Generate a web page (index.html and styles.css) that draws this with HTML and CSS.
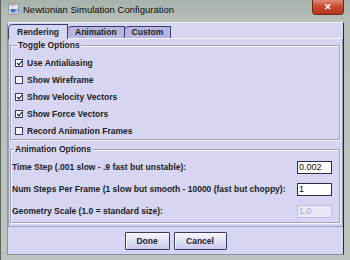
FILE: index.html
```html
<!DOCTYPE html>
<html lang="en">
<head>
  <meta charset="UTF-8">
  <title>Newtonian Simulation Configuration</title>
  <link rel="stylesheet" href="styles.css">
</head>
<body>
  <div class="window">
    <div class="titlebar">
      <svg class="app-icon" viewBox="0 0 12 12" xmlns="http://www.w3.org/2000/svg">
        <rect x="0.5" y="0.5" width="11" height="11" rx="1.5" fill="#dfe6f0" stroke="#7d8aa0"/>
        <path d="M4 3c0.8-0.8 0-1.4 0.7-2M6 3c0.8-0.8 0-1.4 0.7-2" stroke="#d0603a" stroke-width="0.8" fill="none"/>
        <path d="M2.5 6h6v1.5c0 1.4-1.2 2.5-3 2.5s-3-1.1-3-2.5z" fill="#4b77b8"/>
        <path d="M8.5 6.5h1a1 1 0 0 1 0 2h-1.2" stroke="#4b77b8" stroke-width="0.8" fill="none"/>
      </svg>
      <span class="title">Newtonian Simulation Configuration</span>
      <span class="close">&#x2715;</span>
    </div>
    <div class="client">
      <div class="tabs">
        <div class="tab selected">Rendering</div>
        <div class="tab">Animation</div>
        <div class="tab">Custom</div>
      </div>
      <div class="tabpanel">
        <fieldset class="group toggles">
          <legend>Toggle Options</legend>
          <label class="check-row"><span class="box checked"></span>Use Antialiasing</label>
          <label class="check-row"><span class="box"></span>Show Wireframe</label>
          <label class="check-row"><span class="box checked"></span>Show Velocity Vectors</label>
          <label class="check-row"><span class="box checked"></span>Show Force Vectors</label>
          <label class="check-row"><span class="box"></span>Record Animation Frames</label>
        </fieldset>
        <fieldset class="group anim">
          <legend>Animation Options</legend>
          <div class="field-row">
            <span>Time Step (.001 slow - .9 fast but unstable):</span>
            <span class="field">0.002</span>
          </div>
          <div class="field-row">
            <span>Num Steps Per Frame (1 slow but smooth - 10000 (fast but choppy):</span>
            <span class="field">1</span>
          </div>
          <div class="field-row">
            <span>Geometry Scale (1.0 = standard size):</span>
            <span class="field disabled">1.0</span>
          </div>
        </fieldset>
      </div>
      <div class="buttons">
        <button class="btn done">Done</button>
        <button class="btn cancel">Cancel</button>
      </div>
    </div>
  </div>
</body>
</html>
```

FILE: styles.css
```css
body {
  margin: 0;
  font-family: "Liberation Sans", Arial, sans-serif;
  background: #b7bfb8;
}

.window {
  width: 350px;
  height: 260px;
  box-sizing: border-box;
  display: flex;
  flex-direction: column;
  padding: 0 6px 5px 6px;
  border-left: 1px solid #5c645d;
  background: linear-gradient(#a9b2aa, #b8c0b9 22px, #bcc4bd);
}

.titlebar {
  height: 22px;
  display: flex;
  align-items: flex-start;
  color: #000;
}

.app-icon {
  width: 11px;
  height: 12px;
  margin: 3px 0 0 1px;
}

.title {
  margin: 4px 0 0 4px;
  font-size: 9.5px;
  color: #0a0a0a;
}

.close {
  margin-left: auto;
  width: 32px;
  height: 15px;
  box-sizing: border-box;
  border: 1px solid #6e2a1e;
  border-top: none;
  border-radius: 0 0 4px 4px;
  background: linear-gradient(#e08a70, #c6452b 50%, #b5361f);
  color: #fff;
  font-size: 9px;
  font-weight: bold;
  text-align: center;
  line-height: 14px;
}

.client {
  flex: 1;
  display: flex;
  flex-direction: column;
  background: #d6d6f2;
  border: 1px solid #8b90a6;
  border-right-color: #24243e;
  border-top-color: #f2f2fc;
  font-size: 8.5px;
  font-weight: bold;
  color: #1c1c24;
}

.tabs {
  display: flex;
  align-items: flex-end;
  height: 15px;
}

.tab {
  height: 11px;
  line-height: 11px;
  padding: 0 7px 0 7px;
  margin-right: -1px;
  border: 1px solid #3c3c72;
  border-bottom: none;
  border-radius: 5px 1px 0 0;
  background: #b6b6e0;
}

.tab.selected {
  height: 14px;
  line-height: 15px;
  position: relative;
  z-index: 1;
  margin-bottom: -1px;
  padding: 0 8px;
  background: #d6d6f2;
}

.tabpanel {
  flex: 1;
  display: flex;
  flex-direction: column;
  padding: 1px 2px 0 1px;
  border-top: 1px solid #f4f4fd;
  border-left: 1px solid #9c9cc0;
  border-right: 1px solid #9c9cc0;
  border-bottom: 1px solid #9c9cc0;
}

.group {
  margin: 0;
  border: 1px solid #a2a2c0;
  box-shadow: inset 1px 1px 0 #f6f6ff, 1px 1px 0 #f6f6ff;
}

.group legend {
  padding: 0 1px;
  margin-left: 2px;
  line-height: 10px;
}

.toggles {
  padding: 4px 0 0 4px;
}

.check-row {
  display: flex;
  align-items: center;
  gap: 4px;
  height: 17px;
}

.box {
  width: 8px;
  height: 8px;
  box-sizing: border-box;
  border: 1px solid #3c3c5a;
  background: #f4f4fc;
  display: flex;
  align-items: center;
  justify-content: center;
}

.box.checked::after {
  content: "";
  width: 2px;
  height: 4px;
  margin-top: -1px;
  border: solid #111;
  border-width: 0 1.5px 1.5px 0;
  transform: rotate(40deg);
}

.anim {
  margin-top: 4px;
  padding: 2px 7px 0 1px;
}

.field-row {
  display: flex;
  align-items: center;
  justify-content: space-between;
  height: 22px;
}

.field {
  width: 35px;
  height: 13px;
  box-sizing: border-box;
  border: 1px solid #2c2c48;
  background: #fff;
  font-weight: normal;
  line-height: 11px;
  padding-left: 1px;
  font-size: 9px;
  color: #111;
}

.field.disabled {
  border-color: #c0c0da;
  background: #e8e8f8;
  color: #a8a8c4;
}

.buttons {
  height: 27px;
  display: flex;
  align-items: center;
  justify-content: center;
  gap: 4px;
}

.btn {
  height: 18px;
  padding: 0;
  border: 1px solid #3a3a6e;
  border-radius: 1px;
  background: linear-gradient(#f4f4fe, #dcdcf4 60%, #cacaec);
  box-shadow: inset 1px 1px 0 #fff;
  font-family: "Liberation Sans", Arial, sans-serif;
  font-size: 8.5px;
  font-weight: bold;
  color: #1c1c24;
}

.done {
  width: 45px;
}

.cancel {
  width: 53px;
}
```
